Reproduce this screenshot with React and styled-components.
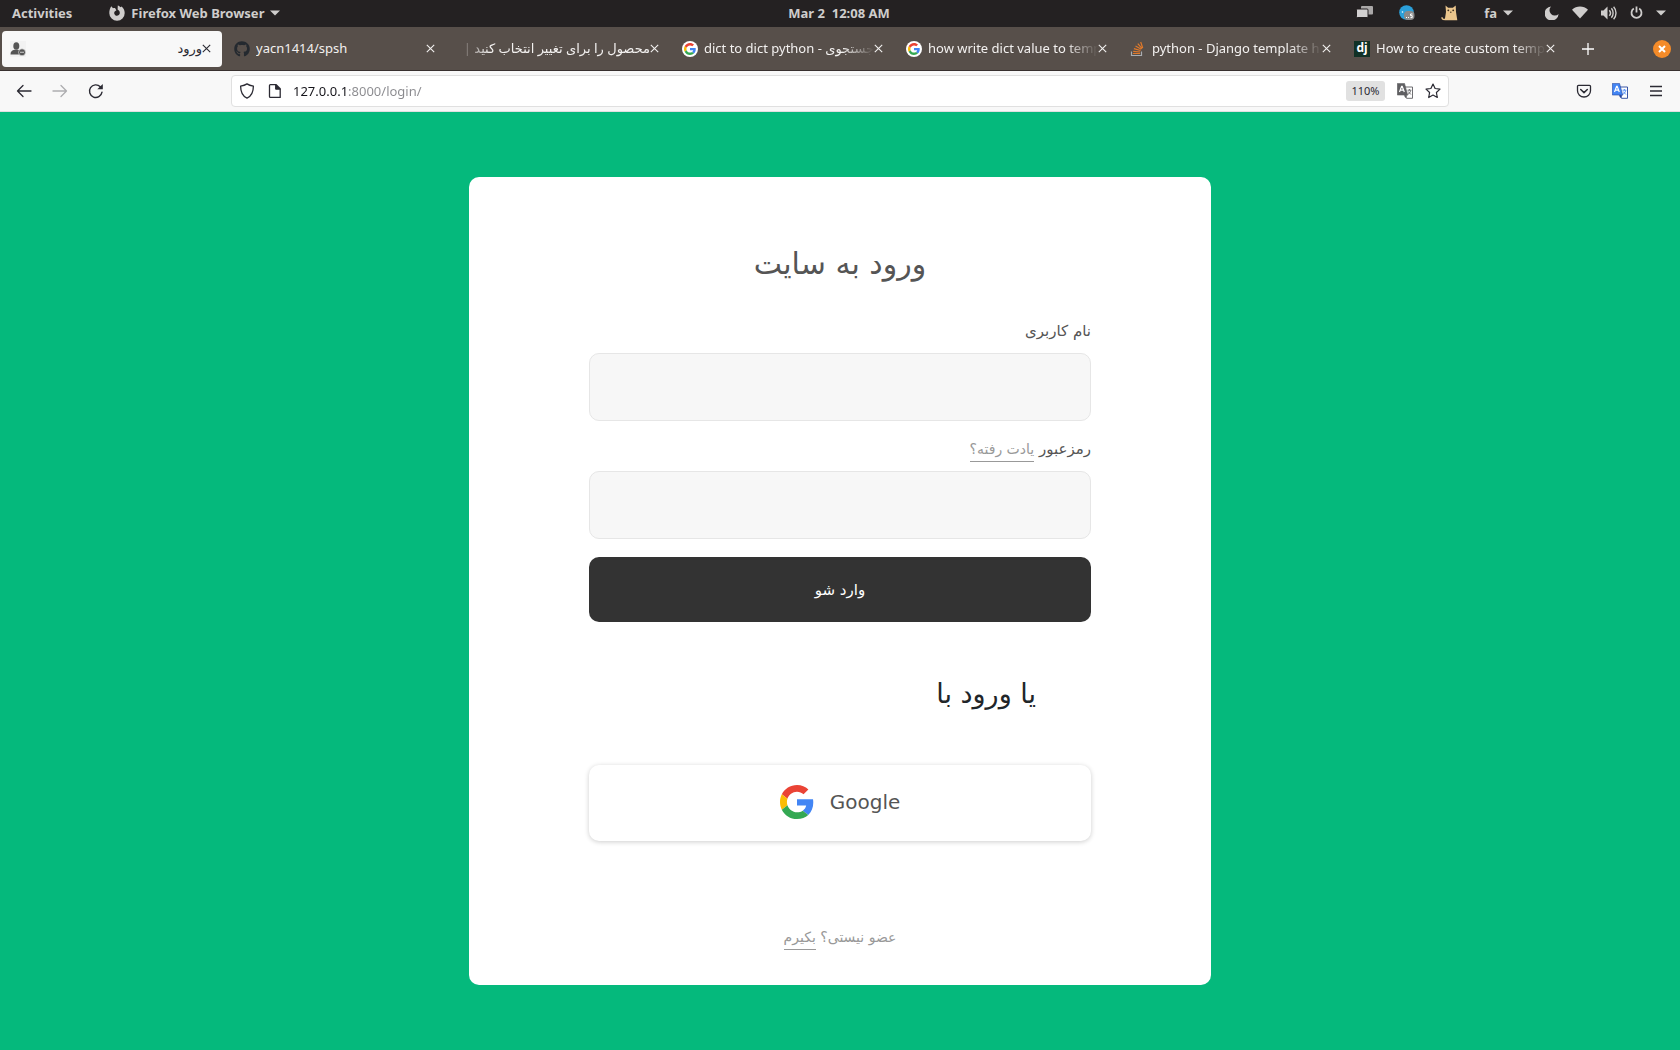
import React from "react";
import styled, { createGlobalStyle, css } from "styled-components";
import { FaGithub } from "react-icons/fa";

const UI = `"Noto Sans", "DejaVu Sans", sans-serif`;
const PERSIAN = `"DejaVu Sans", sans-serif`;

const GlobalStyle = createGlobalStyle`
  *, *::before, *::after { box-sizing: border-box; }
  html, body { height: 100%; }
  body { margin: 0; background: #05b97c; font-family: ${UI}; }
  #root { min-height: 100%; display: flex; flex-direction: column; }
  button, input { font: inherit; }
`;

/* ---------- desktop top bar ---------- */

const TopBar = styled.header`
  display: grid;
  grid-template-columns: 1fr auto 1fr;
  align-items: center;
  height: 27px;
  padding: 0 14px 2px 12px;
  background: #242122;
  color: #cfcdcc;
  font-size: 13px;
  font-weight: 700;
  line-height: 24px;
`;

const BarGroup = styled.div`
  display: flex;
  align-items: center;
  justify-content: ${(p) => (p.$end ? "flex-end" : "flex-start")};
  gap: ${(p) => p.$gap}px;
`;

const BarButton = styled.button`
  display: flex;
  align-items: center;
  gap: 6px;
  padding: 0;
  border: 0;
  background: none;
  color: inherit;
  white-space: pre;
  svg { display: block; flex: none; }
`;

/* ---------- tab strip ---------- */

const TabStrip = styled.nav`
  display: flex;
  align-items: center;
  height: 44px;
  padding: 0 9px 0 2px;
  gap: 4px;
  background: #574f4a;
  border-bottom: 1px solid #38302f;
`;

const Tab = styled.div`
  display: flex;
  align-items: center;
  flex: 0 1 220px;
  min-width: 0;
  height: 36px;
  padding: 0 11px 0 8px;
  border-radius: 4px;
  color: #f3f1f0;
  ${(p) => p.$active && css`
    background: #f8f8f8;
    color: #2b2a33;
  `}
`;

const TabIcon = styled.span`
  display: flex;
  flex: none;
  width: 16px;
  height: 16px;
  margin-right: 6px;
`;

const TabLabel = styled.span`
  flex: 1;
  min-width: 0;
  padding-bottom: 2px;
  overflow: hidden;
  white-space: nowrap;
  font-size: 13px;
  line-height: 24px;
  direction: ${(p) => (p.$rtl ? "rtl" : "ltr")};
  ${(p) => p.$fade && css`
    mask-image: linear-gradient(to ${p.$rtl ? "right" : "left"}, transparent, #000 32px);
  `}
`;

const CloseButton = styled.button`
  display: flex;
  flex: none;
  padding: 0;
  border: 0;
  background: none;
  color: inherit;
`;

const NewTab = styled.button`
  display: flex;
  justify-content: center;
  width: 36px;
  padding: 0;
  border: 0;
  background: none;
  color: #fff;
`;

const WindowClose = styled.button`
  display: flex;
  align-items: center;
  justify-content: center;
  width: 18px;
  height: 18px;
  margin-left: auto;
  padding: 0;
  border: 0;
  border-radius: 50%;
  background: #f48b29;
  color: #fff;
`;

const DjangoMark = styled.span`
  width: 16px;
  height: 16px;
  background: #103126;
  color: #fff;
  font: 700 12px/14px ${UI};
  text-align: center;
`;

/* ---------- navigation toolbar ---------- */

const Toolbar = styled.div`
  display: flex;
  align-items: center;
  height: 41px;
  padding: 0 6px;
  background: #f8f8f8;
  border-bottom: 1px solid #e1dfe0;
`;

const ToolButton = styled.button`
  display: flex;
  align-items: center;
  justify-content: center;
  width: 36px;
  height: 32px;
  padding: 0;
  border: 0;
  background: none;
  color: ${(p) => (p.$dim ? "#adadb0" : "#2b2a33")};
`;

const Spring = styled.div`
  flex: 0 1 117px;
`;

const UrlBar = styled.div`
  display: flex;
  align-items: center;
  flex: 1;
  height: 32px;
  padding: 0 7px;
  gap: 10px;
  border: 1px solid #e0e0e0;
  border-radius: 4px;
  background: #fff;
  color: #2b2a33;
`;

const UrlIcons = styled.div`
  display: flex;
  align-items: center;
  gap: 12px;
  svg { display: block; flex: none; }
`;

const UrlInput = styled.input`
  flex: 1;
  min-width: 0;
  height: 28px;
  padding: 0;
  border: 0;
  outline: 0;
  font-size: 13px;
  background: linear-gradient(to right, #15141a 55px, #8a8a8e 55px);
  background-clip: text;
  -webkit-text-fill-color: transparent;
`;

const ZoomBadge = styled.button`
  height: 20px;
  width: 39px;
  padding: 0;
  border: 0;
  border-radius: 3px;
  background: #e1e1e1;
  color: #2b2a33;
  font-size: 11px;
  line-height: 20px;
`;

/* ---------- login page ---------- */

const Page = styled.main`
  flex: 1;
  display: flex;
  justify-content: center;
  align-items: flex-start;
  padding: 65px 24px;
  background: #05b97c;
`;

const Card = styled.section`
  display: flex;
  flex-direction: column;
  width: 100%;
  max-width: 742px;
  padding: 65px 120px 32px;
  border-radius: 10px;
  background: #fff;
  color: #555;
  font-family: ${PERSIAN};
`;

const Title = styled.h1`
  margin: 0 0 31px;
  font-size: 30px;
  font-weight: 400;
  line-height: 44px;
  text-align: center;
`;

const Form = styled.form`
  display: flex;
  flex-direction: column;
`;

const Field = styled.div`
  display: flex;
  flex-direction: column;
  gap: 8px;
  margin-bottom: ${(p) => (p.$last ? 18 : 14)}px;
`;

const LabelRow = styled.div`
  font-size: 15px;
  line-height: 28px;
`;

const GreyLink = styled.a`
  padding-bottom: 4px;
  border-bottom: 1px solid #999;
  color: #999;
  font-size: 14px;
  text-decoration: none;
`;

const TextBox = styled.input`
  width: 100%;
  height: 68px;
  padding: 0 20px;
  border: 1px solid #e6e6e6;
  border-radius: 10px;
  background: #f7f7f7;
  color: #555;
  font-size: 18px;
`;

const Submit = styled.button`
  height: 65px;
  border: 0;
  border-radius: 10px;
  background: #333;
  color: #fff;
  font-size: 15px;
`;

const Subtitle = styled.h2`
  margin: 48px 55px;
  color: #212529;
  font-size: 27px;
  font-weight: 400;
  line-height: 47px;
`;

const GoogleButton = styled.button`
  display: flex;
  direction: ltr;
  align-items: center;
  justify-content: center;
  gap: 16px;
  height: 76px;
  padding: 0 0 2px;
  border: 0;
  border-radius: 10px;
  background: #fff;
  box-shadow: 0 1px 5px rgba(0, 0, 0, 0.2);
  color: #555;
  font-size: 20px;
`;

const Footer = styled.p`
  margin: 80px 0 0;
  color: #999;
  font-size: 14px;
  line-height: 32px;
  text-align: center;
`;

/* ---------- drawings ---------- */

const GoogleG = ({ size }) => (
  <svg width={size} height={size} viewBox="0 0 48 48" aria-hidden="true">
    <path fill="#EA4335" d="M24 9.5c3.54 0 6.71 1.22 9.21 3.6l6.85-6.85C35.9 2.38 30.47 0 24 0 14.62 0 6.51 5.38 2.56 13.22l7.98 6.19C12.43 13.72 17.74 9.5 24 9.5z" />
    <path fill="#4285F4" d="M46.98 24.55c0-1.57-.15-3.09-.38-4.55H24v9.02h12.94c-.58 2.96-2.26 5.48-4.78 7.18l7.73 6c4.51-4.18 7.09-10.36 7.09-17.65z" />
    <path fill="#FBBC05" d="M10.53 28.59c-.48-1.45-.76-2.99-.76-4.59s.27-3.14.76-4.59l-7.98-6.19C.92 16.46 0 20.12 0 24c0 3.88.92 7.54 2.56 10.78l7.97-6.19z" />
    <path fill="#34A853" d="M24 48c6.48 0 11.93-2.13 15.89-5.81l-7.73-6c-2.15 1.45-4.92 2.3-8.16 2.3-6.26 0-11.57-4.22-13.47-9.91l-7.98 6.19C6.51 42.62 14.62 48 24 48z" />
  </svg>
);

const GoogleFavicon = () => (
  <svg width="16" height="16" viewBox="0 0 16 16" aria-hidden="true">
    <circle cx="8" cy="8" r="8" fill="#fff" />
    <g transform="translate(2 2)"><GoogleG size={12} /></g>
  </svg>
);

const Caret = () => (
  <svg width="10" height="6" viewBox="0 0 10 6" aria-hidden="true"><path d="M0 .5h10L5 5.5z" fill="currentColor" /></svg>
);

const Cross = () => (
  <svg width="9" height="9" viewBox="0 0 9 9" aria-hidden="true">
    <path d="M.8.8l7.4 7.4M8.2.8L.8 8.2" stroke="currentColor" strokeWidth="1.1" fill="none" />
  </svg>
);

const FirefoxMark = () => (
  <svg width="16" height="16" viewBox="0 0 16 16" aria-hidden="true">
    <path fill="currentColor" d="M2.3 1.2L4 3.2c.7-.3 1.400-.3 2-.2L7.400 5.200 6 6.200C4.800 7 5 9.200 6.300 10.200c1.700 1.200 4.200.2 4.500-2C11 6.400 10 5.400 8.600 4.600L8.800.4c1.200.2 2.100.9 2.700 1.800l1-.6C14.500 3.200 15.700 5.400 15.700 8A7.700 7.700 0 0 1 .3 8.200C.2 5.600 1 3 2.300 1.200z" />
  </svg>
);

const UserMark = () => (
  <svg width="16" height="16" viewBox="0 0 16 16" aria-hidden="true">
    <rect width="16" height="16" fill="#f2f2f2" />
    <ellipse cx="6.300" cy="5" rx="3" ry="3.800" fill="#555" />
    <path d="M.5 13.500c0-3 1.500-4 4-4.700h3.600l2.400 1-.6 3.700z" fill="#555" />
    <circle cx="12" cy="11.300" r="3.500" fill="#555" stroke="#f2f2f2" strokeWidth=".6" />
    <path d="M10 11.300h4" stroke="#bbb" strokeWidth="1.200" />
  </svg>
);

const StackMark = () => (
  <svg width="16" height="16" viewBox="0 0 16 16" aria-hidden="true">
    <path d="M1.500 10.500v4h10v-4" stroke="#a9adb1" strokeWidth="1.200" fill="none" />
    <path d="M3 12.500h7M3.200 10.300l6.900.7M3.900 7.700l6.600 1.800M5.500 5l5.800 3.300M7.800 2.700l4.300 5M10.700 1l2 6" stroke="#e0792a" strokeWidth="1.200" fill="none" />
  </svg>
);

const WindowsMark = () => (
  <svg width="17" height="15" viewBox="0 0 17 15" aria-hidden="true">
    <rect x="5" y="1" width="12" height="8.500" rx="1" fill="#aaa8a8" />
    <rect x=".5" y="4" width="11.500" height="8.500" rx="1" fill="#d2d0d0" stroke="#242122" />
  </svg>
);

const BirdMark = () => (
  <svg width="16" height="16" viewBox="0 0 16 16" aria-hidden="true">
    <circle cx="7.500" cy="7.500" r="7.300" fill="#2ba0da" />
    <rect x="5" y="6" width="10.500" height="9" rx="4" fill="#8b8b8b" />
    <path d="M7 12.500h1M9 12.500h1M13.500 9h-2v1.600h1.700v2H11.500" stroke="#fff" fill="none" />
    <circle cx="3.500" cy="7" r=".8" fill="#fff" />
  </svg>
);

const CatMark = () => (
  <svg width="17" height="16" viewBox="0 0 17 16" aria-hidden="true">
    <path d="M4.500 14.200C2.500 15 .5 14 1.300 12.200" stroke="#e9c48b" strokeWidth="1.400" fill="none" />
    <path d="M4.500.5l2.600 2.300h4.800L14.700.5 15 7l1.300 8.200H3.700L5 7z" fill="#ebc68d" />
    <circle cx="7.300" cy="5.300" r=".9" fill="#3b2d1c" />
    <circle cx="12.200" cy="5.300" r=".9" fill="#3b2d1c" />
    <path d="M9 7.200h1.500" stroke="#3b2d1c" />
  </svg>
);

const MoonMark = () => (
  <svg width="14" height="14" viewBox="0 0 14 14" aria-hidden="true">
    <path d="M6 .5A5 5 0 1 0 13.600 8 7 7 0 1 1 6 .5z" fill="currentColor" />
  </svg>
);

const WifiMark = () => (
  <svg width="16" height="13" viewBox="0 0 16 13" aria-hidden="true">
    <path d="M0 3.700C4.500-.5 11.500-.5 16 3.700L8 12.500z" fill="currentColor" />
  </svg>
);

const VolumeMark = () => (
  <svg width="16" height="14" viewBox="0 0 16 14" aria-hidden="true">
    <path d="M0 4.500h2.500L6.500.5v13l-4-4H0z" fill="currentColor" />
    <path d="M8.300 4.200c1.400 1.600 1.400 4 0 5.600" stroke="currentColor" strokeWidth="1.500" fill="none" />
    <path d="M10.400 2.300c2.300 2.600 2.300 6.800 0 9.400M12.600.7c3.200 3.500 3.200 9.100 0 12.600" stroke="currentColor" strokeWidth="1.400" fill="none" />
  </svg>
);

const PowerMark = () => (
  <svg width="13" height="14" viewBox="0 0 13 14" aria-hidden="true">
    <path d="M3.800 2.600a5 5 0 1 0 5.400 0M6.500.5v6" stroke="currentColor" strokeWidth="1.800" fill="none" />
  </svg>
);

const Arrow = ({ flip }) => (
  <svg width="16" height="16" viewBox="0 0 16 16" aria-hidden="true">
    <path transform={flip ? "matrix(-1 0 0 1 16 0)" : undefined} d="M15 8H1.500M7 2.500L1.500 8 7 13.500" stroke="currentColor" strokeWidth="1.300" strokeLinecap="round" strokeLinejoin="round" fill="none" />
  </svg>
);

const Reload = () => (
  <svg width="16" height="16" viewBox="0 0 16 16" aria-hidden="true">
    <path d="M14 9.200A6.300 6.300 0 1 1 12.300 3.800" stroke="currentColor" strokeWidth="1.400" strokeLinecap="round" fill="none" />
    <path d="M14.800 1v5.200H9.300z" fill="currentColor" />
  </svg>
);

const Shield = () => (
  <svg width="16" height="16" viewBox="0 0 16 16" aria-hidden="true">
    <path d="M8 .9c1.700 1.200 4 1.900 6.400 2.200C14.400 9.300 12.500 13.300 8 15.200 3.500 13.300 1.600 9.300 1.600 3.100 4 2.800 6.300 2.100 8 .9z" stroke="currentColor" strokeWidth="1.300" strokeLinejoin="round" fill="none" />
  </svg>
);

const PageMark = () => (
  <svg width="16" height="16" viewBox="0 0 16 16" aria-hidden="true">
    <path d="M3.400 1.600h5.800l4 4v8.800H3.400a.9.9 0 0 1-.9-.9V2.500a.9.9 0 0 1 .9-.9z" stroke="currentColor" strokeWidth="1.300" strokeLinejoin="round" fill="none" />
    <path d="M8.600 1.600v4.600h4.600z" fill="currentColor" stroke="currentColor" />
  </svg>
);

const Translate = ({ color, edge }) => (
  <svg width="16" height="16" viewBox="0 0 16 16" aria-hidden="true">
    <path d="M6 4h9.500v11.300H9.500z" fill="#fff" stroke={edge} strokeWidth=".9" />
    <path d="M10.500 7.200h3.800M12.400 6v1.200M13.700 7.500c-.5 2-1.500 3-2.800 3.900M11.200 8.500l2.700 3" stroke={color} strokeWidth=".9" fill="none" />
    <path d="M.3.400h7.200L10.700 12H.3z" fill={color} stroke={edge} strokeWidth=".6" />
    <path d="M2.500 9L4.600 3.300h.6L7.300 9M3.300 7.200h3.200" stroke="#fff" strokeWidth="1.200" fill="none" />
    <path d="M6.800 12.200h3.800L8.500 15z" fill={edge} />
  </svg>
);

const Star = () => (
  <svg width="16" height="16" viewBox="0 0 16 16" aria-hidden="true">
    <path d="M8 1l2.100 4.500 4.900.6-3.600 3.400.9 5L8 12.100l-4.300 2.400.9-5L1 6.100l4.900-.6z" stroke="currentColor" strokeWidth="1.200" strokeLinejoin="round" fill="none" />
  </svg>
);

const Pocket = () => (
  <svg width="16" height="16" viewBox="0 0 16 16" aria-hidden="true">
    <path d="M2.500 2.300h11a1 1 0 0 1 1 1v4.500a6.500 6.200 0 0 1-13 0V3.300a1 1 0 0 1 1-1z" stroke="currentColor" strokeWidth="1.300" fill="none" />
    <path d="M4.700 6.500L8 9.600l3.300-3.100" stroke="currentColor" strokeWidth="1.500" strokeLinecap="round" strokeLinejoin="round" fill="none" />
  </svg>
);

const MenuLines = () => (
  <svg width="14" height="14" viewBox="0 0 14 14" aria-hidden="true">
    <path d="M1 2.500h12M1 7h12M1 11.500h12" stroke="currentColor" strokeWidth="1.300" />
  </svg>
);

const tabs = [
  { title: "ورود", icon: <UserMark />, active: true, rtl: true },
  { title: "yacn1414/spsh", icon: <FaGithub size={16} color="#24292f" /> },
  { title: "محصول را برای تغییر انتخاب کنید |", rtl: true, fade: true },
  { title: "dict to dict python - جستجوی", icon: <GoogleFavicon />, fade: true },
  { title: "how write dict value to temp", icon: <GoogleFavicon />, fade: true },
  { title: "python - Django template h", icon: <StackMark />, fade: true },
  { title: "How to create custom temp", icon: <DjangoMark>dj</DjangoMark>, fade: true },
];

export default function App() {
  return (
    <>
      <GlobalStyle />
      <TopBar>
        <BarGroup $gap={37}>
          <BarButton>Activities</BarButton>
          <BarButton><FirefoxMark />Firefox Web Browser<Caret /></BarButton>
        </BarGroup>
        <BarButton>{"Mar 2  12:08 AM"}</BarButton>
        <BarGroup $end $gap={32}>
          <BarGroup $gap={26}>
            <BarButton aria-label="Workspaces"><WindowsMark /></BarButton>
            <BarButton aria-label="Messages"><BirdMark /></BarButton>
            <BarButton aria-label="Cat"><CatMark /></BarButton>
            <BarButton>fa<Caret /></BarButton>
          </BarGroup>
          <BarGroup $gap={13}>
            <BarButton aria-label="Night light"><MoonMark /></BarButton>
            <BarButton aria-label="Network"><WifiMark /></BarButton>
            <BarButton aria-label="Volume"><VolumeMark /></BarButton>
            <BarButton aria-label="Power"><PowerMark /></BarButton>
            <BarButton aria-label="System menu"><Caret /></BarButton>
          </BarGroup>
        </BarGroup>
      </TopBar>

      <TabStrip aria-label="Tabs">
        {tabs.map((t) => (
          <Tab key={t.title} $active={t.active}>
            {t.icon && <TabIcon>{t.icon}</TabIcon>}
            <TabLabel $rtl={t.rtl} $fade={t.fade}>{t.title}</TabLabel>
            <CloseButton aria-label="Close tab"><Cross /></CloseButton>
          </Tab>
        ))}
        <NewTab aria-label="New tab">
          <svg width="12" height="12" viewBox="0 0 12 12"><path d="M6 0v12M0 6h12" stroke="currentColor" strokeWidth="1.300" /></svg>
        </NewTab>
        <WindowClose aria-label="Close window">
          <svg width="8" height="8" viewBox="0 0 8 8"><path d="M1 1l6 6M7 1L1 7" stroke="currentColor" strokeWidth="2" /></svg>
        </WindowClose>
      </TabStrip>

      <Toolbar>
        <ToolButton aria-label="Back"><Arrow /></ToolButton>
        <ToolButton aria-label="Forward" $dim><Arrow flip /></ToolButton>
        <ToolButton aria-label="Reload"><Reload /></ToolButton>
        <Spring />
        <UrlBar>
          <UrlIcons>
            <Shield />
            <PageMark />
          </UrlIcons>
          <UrlInput aria-label="Address" defaultValue="127.0.0.1:8000/login/" />
          <UrlIcons>
            <ZoomBadge>110%</ZoomBadge>
            <Translate color="#5f5f62" edge="#5f5f62" />
            <Star />
          </UrlIcons>
        </UrlBar>
        <Spring />
        <ToolButton aria-label="Save to Pocket"><Pocket /></ToolButton>
        <ToolButton aria-label="Translate"><Translate color="#4285f4" edge="#24439c" /></ToolButton>
        <ToolButton aria-label="Menu"><MenuLines /></ToolButton>
      </Toolbar>

      <Page>
        <Card dir="rtl" lang="fa">
          <Title>ورود به سایت</Title>
          <Form onSubmit={(e) => e.preventDefault()}>
            <Field>
              <LabelRow><label htmlFor="username">نام کاربری</label></LabelRow>
              <TextBox id="username" type="text" />
            </Field>
            <Field $last>
              <LabelRow>
                <label htmlFor="password">رمزعبور</label>{" "}
                <GreyLink href="#forgot">یادت رفته؟</GreyLink>
              </LabelRow>
              <TextBox id="password" type="password" />
            </Field>
            <Submit type="submit">وارد شو</Submit>
          </Form>
          <Subtitle>یا ورود با</Subtitle>
          <GoogleButton type="button"><GoogleG size={34} />Google</GoogleButton>
          <Footer>
            عضو نیستی؟ <GreyLink href="#signup">بکیرم</GreyLink>
          </Footer>
        </Card>
      </Page>
    </>
  );
}
